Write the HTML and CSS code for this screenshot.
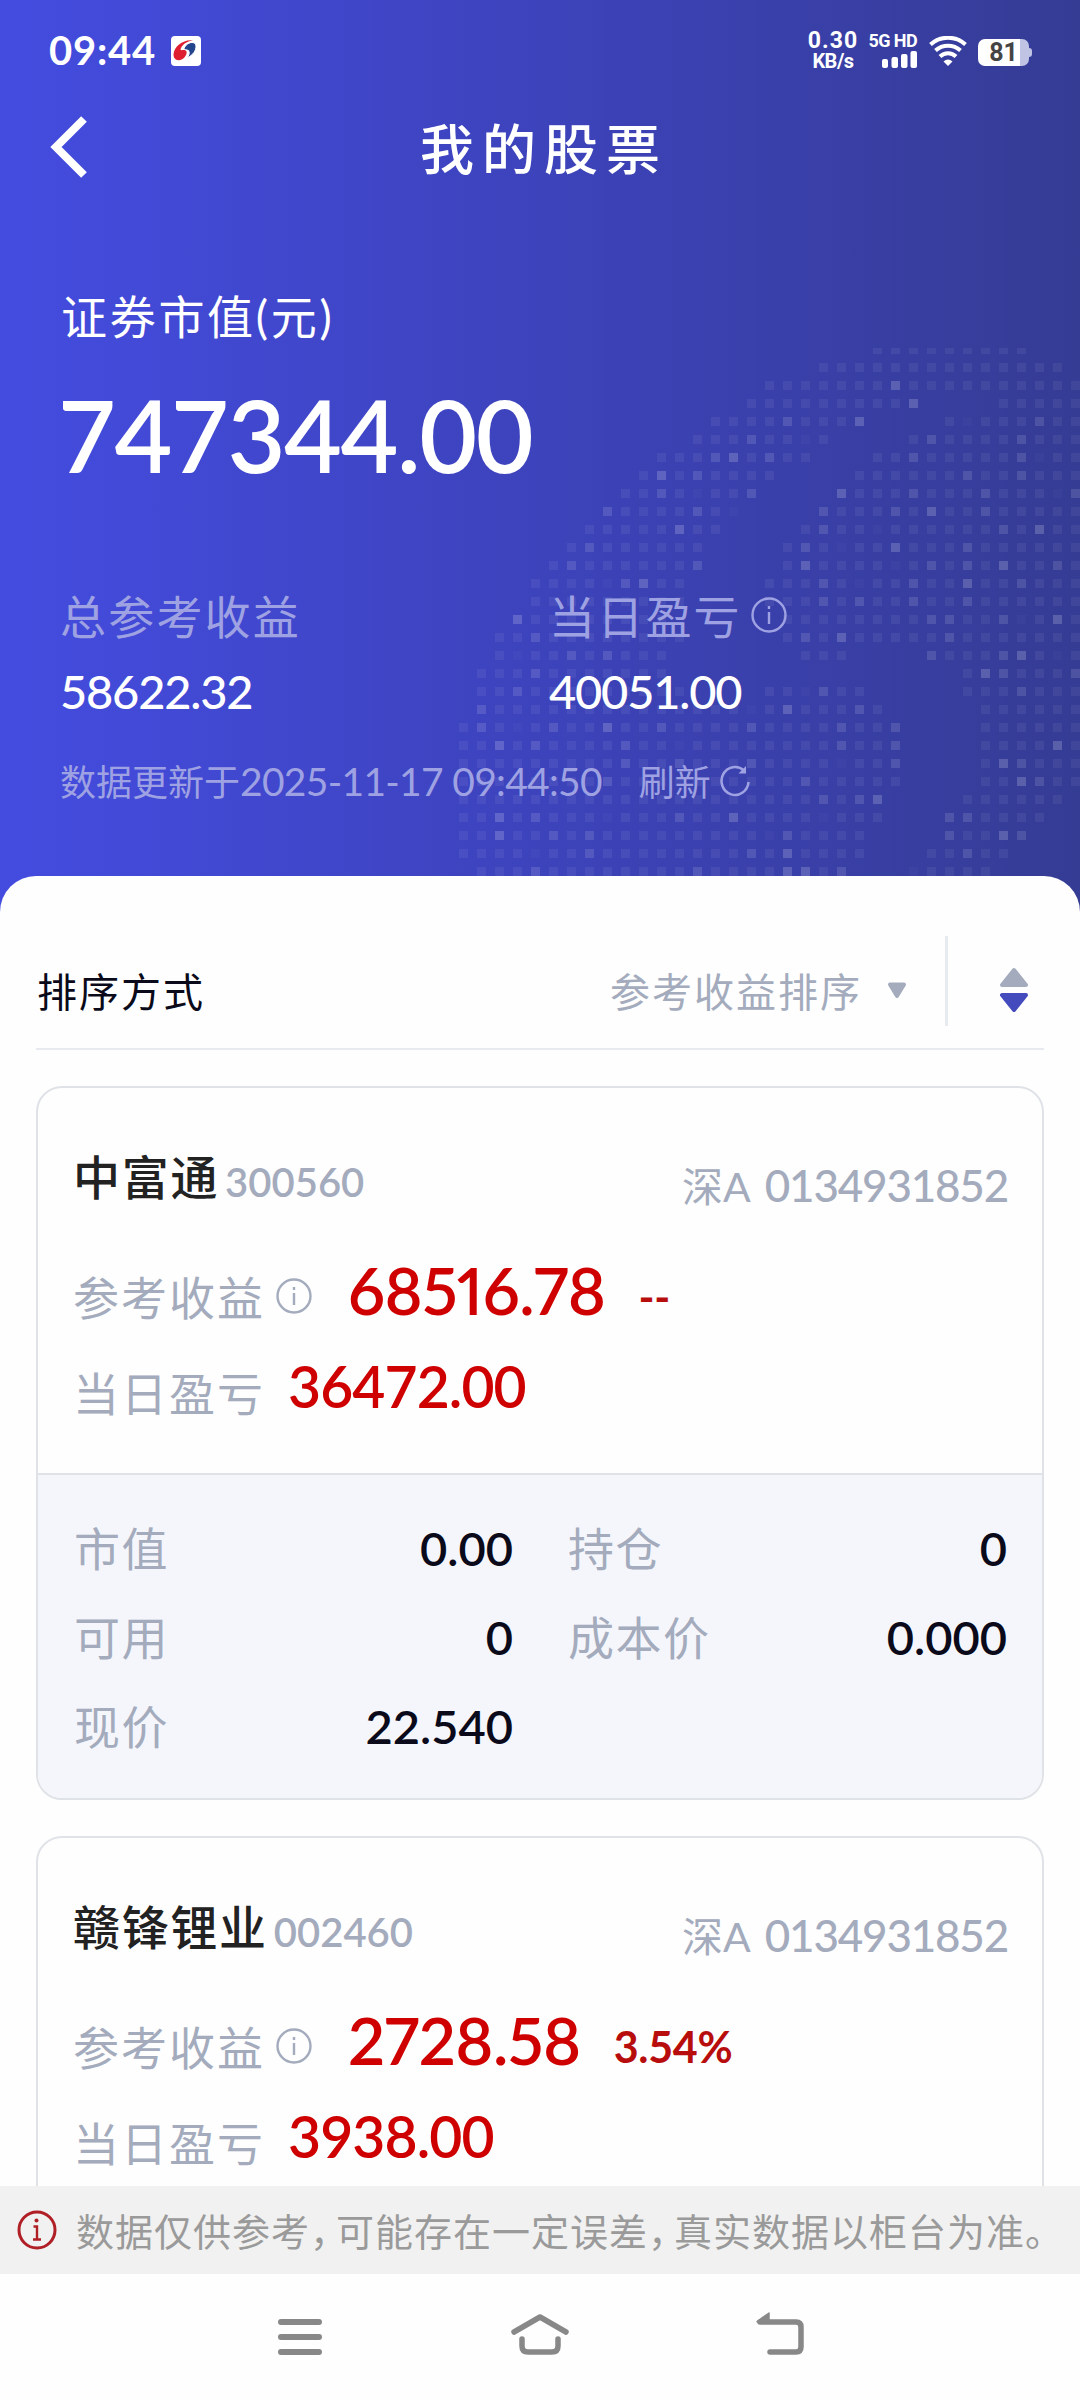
FILE: index.html
```html
<!DOCTYPE html>
<html lang="zh-CN">
<head>
  <meta charset="UTF-8">
  <title>我的股票</title>
  <link rel="stylesheet" href="styles.css">
</head>
<body>
  <header class="hero">
    <svg class="dots" id="dots" width="621" height="528" viewBox="459 348 621 528"></svg>

    <div class="status">
      <span class="time">09:44</span>
      <svg class="app" width="30" height="30" viewBox="0 0 30 30">
        <rect width="30" height="30" rx="4" fill="#fff"/>
        <path d="M22 4.500C13 3 3 10 2.500 18.500C2.500 22 5 25 9 24c5-1 8-7 6-9.500-2-1-4 0-5.500-.5C10 9 16 5 22 4.500z" fill="#dd1f30"/>
        <path d="M15.500 9c2.500-3 9-4 9.500 1 0 5-3 9-9 12 2-2.500 3-5.500 1.500-7.500-1.500-1-3.500 0-4.500-1.500 0-1 1-3 2.500-4z" fill="#24448c" stroke="#fff" stroke-width="1"/>
      </svg>
      <div class="speed"><b>0.30</b><i>KB/s</i></div>
      <div class="signal">
        <span>5G HD</span>
        <svg width="35" height="17" viewBox="0 0 35 17" fill="#fff">
          <rect x="0" y="8" width="6" height="9" rx="2"/>
          <rect x="9.500" y="6" width="6.500" height="11" rx="2"/>
          <rect x="19" y="3" width="6.500" height="14" rx="2"/>
          <rect x="28.500" y="0" width="6.500" height="17" rx="2"/>
        </svg>
      </div>
      <svg class="wifi" width="38" height="30" viewBox="0 0 38 30" fill="none" stroke="#fff" stroke-width="4">
        <path d="M1.500 8.500a26 26 0 0 1 35 0"/>
        <path d="M6.500 14.500a18.500 18.500 0 0 1 25 0"/>
        <path d="M11 20.500a11.500 11.500 0 0 1 16 0"/>
        <path d="M14.500 25.500q4.500-4 9 0L19 30z" fill="#fff" stroke="none"/>
      </svg>
      <div class="battery"><span>81</span></div>
    </div>

    <div class="nav">
      <svg width="38" height="62" viewBox="0 0 38 62" fill="none" stroke="#fff" stroke-width="8"><path d="M34 3L6 31l28 28"/></svg>
      <h1>我的股票</h1>
    </div>

    <p class="total-label">证券市值(元)</p>
    <p class="total">747344.00</p>

    <div class="sums">
      <div>
        <p class="sum-label">总参考收益</p>
        <p class="sum">58622.32</p>
      </div>
      <div>
        <p class="sum-label">当日盈亏
          <svg class="info" width="36" height="36" viewBox="0 0 36 36"><circle cx="18" cy="18" r="16.500"/><path d="M18 15v12M18 9v3"/></svg>
        </p>
        <p class="sum">40051.00</p>
      </div>
    </div>

    <p class="updated"><span>数据更新于<em>2025-11-17 09:44:50</em></span><span class="refresh">刷新</span>
      <svg width="32" height="32" viewBox="0 0 32 32" fill="none" stroke="#9fa2e2" stroke-width="2.600"><path d="M25 5.500A13.500 14 0 1 0 29.500 17"/><path d="M27 1v7.500h-7.500z" fill="#9fa2e2" stroke="none"/></svg>
    </p>
  </header>

  <main class="sheet">
    <div class="sort">
      <span class="sort-title">排序方式</span>
      <span class="sort-by">参考收益排序</span>
      <svg class="caret" width="20" height="17" viewBox="0 0 20 17"><path d="M3 2.500h14L10 14z" fill="#a3abbd" stroke="#a3abbd" stroke-width="4" stroke-linejoin="round"/></svg>
      <span class="line"></span>
      <svg class="order" width="30" height="48" viewBox="0 0 30 48" stroke-width="4" stroke-linejoin="round">
        <path d="M3 19L15 4l12 15z" fill="#a3abbd" stroke="#a3abbd"/>
        <path d="M3 29h24L15 44z" fill="#434bbd" stroke="#434bbd"/>
      </svg>
    </div>

    <section class="card">
      <div class="card-head">
        <h2>中富通</h2><span class="code">300560</span>
        <span class="account">深A <em>0134931852</em></span>
      </div>
      <div class="profit">
        <span class="label">参考收益</span>
        <svg class="info" width="36" height="36" viewBox="0 0 36 36"><circle cx="18" cy="18" r="16.500"/><path d="M18 15v12M18 9v3"/></svg>
        <span class="big">68516.78</span>
        <span class="rate">--</span>
      </div>
      <div class="today">
        <span class="label">当日盈亏</span>
        <span class="mid">36472.00</span>
      </div>
      <dl class="detail">
        <div><dt>市值</dt><dd>0.00</dd></div>
        <div><dt>持仓</dt><dd>0</dd></div>
        <div><dt>可用</dt><dd>0</dd></div>
        <div><dt>成本价</dt><dd>0.000</dd></div>
        <div><dt>现价</dt><dd>22.540</dd></div>
      </dl>
    </section>

    <section class="card">
      <div class="card-head">
        <h2>赣锋锂业</h2><span class="code">002460</span>
        <span class="account">深A <em>0134931852</em></span>
      </div>
      <div class="profit">
        <span class="label">参考收益</span>
        <svg class="info" width="36" height="36" viewBox="0 0 36 36"><circle cx="18" cy="18" r="16.500"/><path d="M18 15v12M18 9v3"/></svg>
        <span class="big">2728.58</span>
        <span class="rate">3.54%</span>
      </div>
      <div class="today">
        <span class="label">当日盈亏</span>
        <span class="mid">3938.00</span>
      </div>
    </section>
  </main>

  <footer>
    <div class="notice">
      <svg width="40" height="40" viewBox="0 0 40 40" fill="none" stroke="#b01f26" stroke-width="3"><circle cx="20" cy="20" r="18"/><path d="M16.500 16.500H20V29M16 29.500h8" stroke-width="2.400"/><circle cx="19.500" cy="10.500" r="2" fill="#b01f26" stroke="none"/></svg>
      <span>数据仅供参考<i>，</i>可能存在一定误差<i>，</i>真实数据以柜台为准。</span>
    </div>
    <div class="keys">
      <svg width="60" height="48" viewBox="0 0 60 48"><path d="M11 12h38M11 27h38M11 42h38"/></svg>
      <svg width="60" height="48" viewBox="0 0 60 48"><path d="M4 22L30 7l26 15" stroke-width="5.500"/><path d="M12 29v7q0 6 6 6h24q6 0 6-6v-7" stroke-width="5.500"/></svg>
      <svg width="60" height="48" viewBox="0 0 60 48"><path d="M20 42h26q5 0 5-5V17q0-5-5-5H10" stroke-width="5.500"/><path d="M7 11.500L19 3v9H8z" fill="#888" stroke-width="1.500"/></svg>
    </div>
  </footer>
  <script src="dots.js"></script>
</body>
</html>
```

FILE: styles.css
```css
* {
  box-sizing: border-box;
  margin: 0;
  padding: 0;
}
body {
  width: 1080px;
  height: 2400px;
  overflow: hidden;
  display: flex;
  flex-direction: column;
  background: #fefefe;
  font-family: Lato, "Noto Sans CJK SC", sans-serif;
  color: #0a0a1a;
}
em, i {
  font-style: normal;
}
svg {
  display: block;
  flex: none;
}

/* header */
.hero {
  position: relative;
  height: 916px;
  flex: none;
  background: linear-gradient(90deg, #444ce0, #3d43bb 50%, #353c94);
  color: #fff;
}
.dots {
  position: absolute;
  left: 459px;
  top: 348px;
}
.hero > :not(.dots) {
  position: relative;
}
.status {
  display: flex;
  align-items: center;
  height: 102px;
  padding: 0 48px 0 49px;
}
.time {
  width: 122px;
  margin-top: -2px;
  font-size: 40px;
  font-weight: 700;
  letter-spacing: 0.8px;
}
.speed {
  display: flex;
  flex-direction: column;
  align-items: center;
  width: 54px;
  margin-left: 605px;
  font-family: Roboto, sans-serif;
  font-size: 23px;
  line-height: 20px;
  font-weight: 700;
}
.speed b {
  font-weight: 700;
  letter-spacing: 1px;
}
.speed i {
  font-size: 20px;
  line-height: 20px;
  letter-spacing: -0.5px;
}
.signal {
  display: flex;
  flex-direction: column;
  align-items: flex-end;
  width: 48px;
  margin-left: 9px;
  font-family: Roboto, sans-serif;
  font-size: 18px;
  line-height: 14px;
  font-weight: 700;
  gap: 3px;
  white-space: nowrap;
}
.signal span {
  letter-spacing: -0.6px;
}
.wifi {
  margin-left: 12px;
}
.battery {
  position: relative;
  width: 51px;
  height: 27px;
  margin: 3px 0 0 11px;
  border-radius: 7px;
  background: linear-gradient(90deg, #fff 42px, #c0c3e4 42px);
  color: #444;
  font-family: Roboto, sans-serif;
  font-size: 25px;
  line-height: 28px;
  font-weight: 700;
  text-align: center;
  flex: none;
}
.battery::after {
  content: "";
  position: absolute;
  right: -3px;
  top: 9px;
  width: 3px;
  height: 9px;
  border-radius: 0 3px 3px 0;
  background: #c0c3e4;
}
.nav {
  display: flex;
  align-items: center;
  height: 90px;
  padding-left: 50px;
}
.nav h1 {
  margin: -2px 0 0 332px;
  font-size: 54px;
  font-weight: 500;
  letter-spacing: 8px;
}
.total-label {
  margin: 90px 0 0 61px;
  font-size: 46px;
  line-height: 70px;
  letter-spacing: 2.7px;
}
.total {
  margin: 24px 0 0 58px;
  font-size: 100px;
  line-height: 116px;
  font-weight: 600;
  letter-spacing: -1.5px;
}
.sums {
  display: flex;
  margin-top: 92px;
  padding-left: 60px;
}
.sums > div {
  width: 489px;
}
.sum-label {
  display: flex;
  align-items: center;
  gap: 9px;
  font-size: 46px;
  line-height: 66px;
  letter-spacing: 2.2px;
  color: #9fa2e2;
}
.info {
  margin-top: -4px;
  fill: none;
  stroke: #9fa2e2;
  stroke-width: 2.4;
}
.sum {
  margin-top: 13px;
  font-size: 47px;
  line-height: 56px;
  font-weight: 500;
  letter-spacing: -1.2px;
}
.updated {
  display: flex;
  align-items: center;
  margin: 32px 0 0 60px;
  font-size: 36px;
  line-height: 60px;
  color: #9fa2e2;
}
.updated em {
  font-size: 39px;
  letter-spacing: -0.7px;
}
.updated svg {
  margin-top: -2px;
}
.refresh {
  margin: 0 8px 0 37px;
}

/* list */
.sheet {
  position: relative;
  flex: 1;
  min-height: 0;
  overflow: hidden;
  margin-top: -40px;
  padding: 0 36px;
  border-radius: 36px 36px 0 0;
  background: #fefefe;
}
.sort {
  display: flex;
  align-items: center;
  height: 174px;
  padding-top: 55px;
  border-bottom: 2px solid #e7ebef;
  font-size: 40px;
  letter-spacing: 2px;
}
.sort-title {
  flex: 1;
  padding-left: 1px;
}
.sort-by {
  color: #a3abbd;
}
.caret {
  margin: 2px 0 0 25px;
}
.line {
  width: 3px;
  height: 90px;
  margin: -17px 51px 0 38px;
  background: #e7ebef;
}
.order {
  margin-right: 15px;
}
.card {
  height: 714px;
  margin-top: 36px;
  border: 2px solid #dfe2e7;
  border-radius: 26px;
  overflow: hidden;
}
.card-head {
  display: flex;
  align-items: baseline;
  height: 162px;
  padding: 54px 34px 0 35px;
}
.card-head h2 {
  font-size: 47px;
  line-height: 70px;
  font-weight: 500;
  letter-spacing: 1.7px;
  color: #222;
}
.code {
  position: relative;
  top: 2px;
  flex: 1;
  margin-left: 6px;
  font-size: 40px;
  font-weight: 600;
  color: #a3abbd;
}
.account {
  position: relative;
  top: 7px;
  font-size: 41px;
  word-spacing: 5px;
  color: #a3abbd;
}
.account em {
  font-size: 44px;
  font-weight: 500;
  letter-spacing: -1.2px;
}
.label {
  font-size: 46px;
  letter-spacing: 2px;
  color: #a3abbd;
}
.profit, .today {
  display: flex;
  align-items: center;
  height: 96px;
  padding-left: 35px;
  color: #cf0000;
  line-height: 80px;
}
.profit .info {
  margin: -4px 36px 0 11px;
  stroke: #a3abbd;
}
.big {
  margin-top: -16px;
  font-size: 65px;
  font-weight: 600;
  font-variant-numeric: proportional-nums;
  letter-spacing: -0.5px;
}
.rate {
  margin: -2px 0 0 33px;
  font-size: 43px;
  font-weight: 700;
  letter-spacing: -0.3px;
  color: #b80d0d;
}
.mid {
  margin: -16px 0 0 23px;
  font-size: 57px;
  font-weight: 600;
  letter-spacing: -0.9px;
}
.detail {
  display: grid;
  grid-template-columns: 438px 438px;
  column-gap: 56px;
  align-content: start;
  height: 330px;
  margin-top: 31px;
  padding: 26px 36px;
  border-top: 2px solid #dfe2e7;
  background: #f5f6fb;
}
.detail div {
  display: flex;
  justify-content: space-between;
  align-items: center;
  height: 89px;
}
dt {
  font-size: 46px;
  letter-spacing: 1.5px;
  color: #a3abbd;
}
dd {
  margin: 4px -1px 0 0;
  font-size: 47px;
  font-weight: 600;
}

/* bottom */
footer {
  position: relative;
  flex: none;
}
.notice {
  display: flex;
  align-items: center;
  height: 88px;
  padding-left: 17px;
  background: #f1f1f1;
  color: #9a9a9a;
  font-size: 38px;
  letter-spacing: 1px;
  white-space: nowrap;
}
.notice svg {
  margin-top: -1px;
}
.notice span {
  margin: -2px 0 0 19px;
}
.notice i {
  letter-spacing: -12px;
}
.keys {
  display: flex;
  justify-content: center;
  gap: 180px;
  height: 126px;
  padding-top: 36px;
  background: #fefefe;
}
.keys svg {
  fill: none;
  stroke: #888;
  stroke-width: 6;
  stroke-linecap: round;
  stroke-linejoin: round;
}
```

FILE: dots.js
```js
// each row: filled column ranges | brighter columns | brightest | faint
const rows = [
  '23-31|||',
  '20-33|||',
  '17-34||24|',
  '16-25,30-34||25|',
  '14-22,27-34|18,32|22|28',
  '13-20,25-34|16,26,31||19',
  '11-19,23-34|14,17,25,31|15|32',
  '10-17,22-34|13,28,31|11|',
  '9-16,21-34|11,16,25,29,34|21|13,33',
  '8-15,20-34|8,13,20,24,29|26|15',
  '7-14,19-34|20,30|12,32|23',
  '6-13,18-34|7,19,28|24|21',
  '5-13,18-34|6,13,26,28,33|19,30|24',
  '4-12,17-34|9,20,25,31|10,28|8,22',
  '4-12,17-34|20,22,25,28||',
  '3-11,18-34|26,27,30|3,33|31',
  '2-12,18-34|4,19,27|21|',
  '2-11,19-21,26-34|6,8,26,30|31|3,33',
  '1-11,28-34|4,30,34|29|',
  '1-12,17-22,28-34|3,20,31||19',
  '1-23,29-34|1,22|18|16',
  '0-24,29-34|1,5,11,16,21,24|8|3',
  '0-24,29-34|4,9,21,24|2,33|12',
  '0-24,29-34|9,12,16,24,31|30|21',
  '0-24,29-34|8,19,32|31|',
  '0-23,28-33|20,22|23|',
  '0-23,27-32|4,12,27,28|2,15|8,20',
  '0-22,27-31|5,7,18,27,31|2,30|17',
  '0-22,26-30|7,16,28|18|4',
  '1-21,25-29|4,13,21|18,19|25'
];

const list = text => text.split(',').filter(Boolean).map(Number);
let rects = '';
rows.forEach((row, r) => {
  const [ranges, bright, top, faint] = row.split('|');
  ranges.split(',').forEach(range => {
    const [from, to] = range.split('-').map(Number);
    for (let c = from; c <= to; c++) {
      let alpha = 0.06;
      if (list(bright).includes(c)) alpha = 0.12;
      if (list(top).includes(c)) alpha = 0.18;
      if (list(faint).includes(c)) alpha = 0.025;
      rects += `<rect x="${459 + c * 18}" y="${345 + r * 18}" width="9" height="9" fill="#fff" fill-opacity="${alpha}"/>`;
    }
  });
});
document.getElementById('dots').innerHTML = rects;
```
